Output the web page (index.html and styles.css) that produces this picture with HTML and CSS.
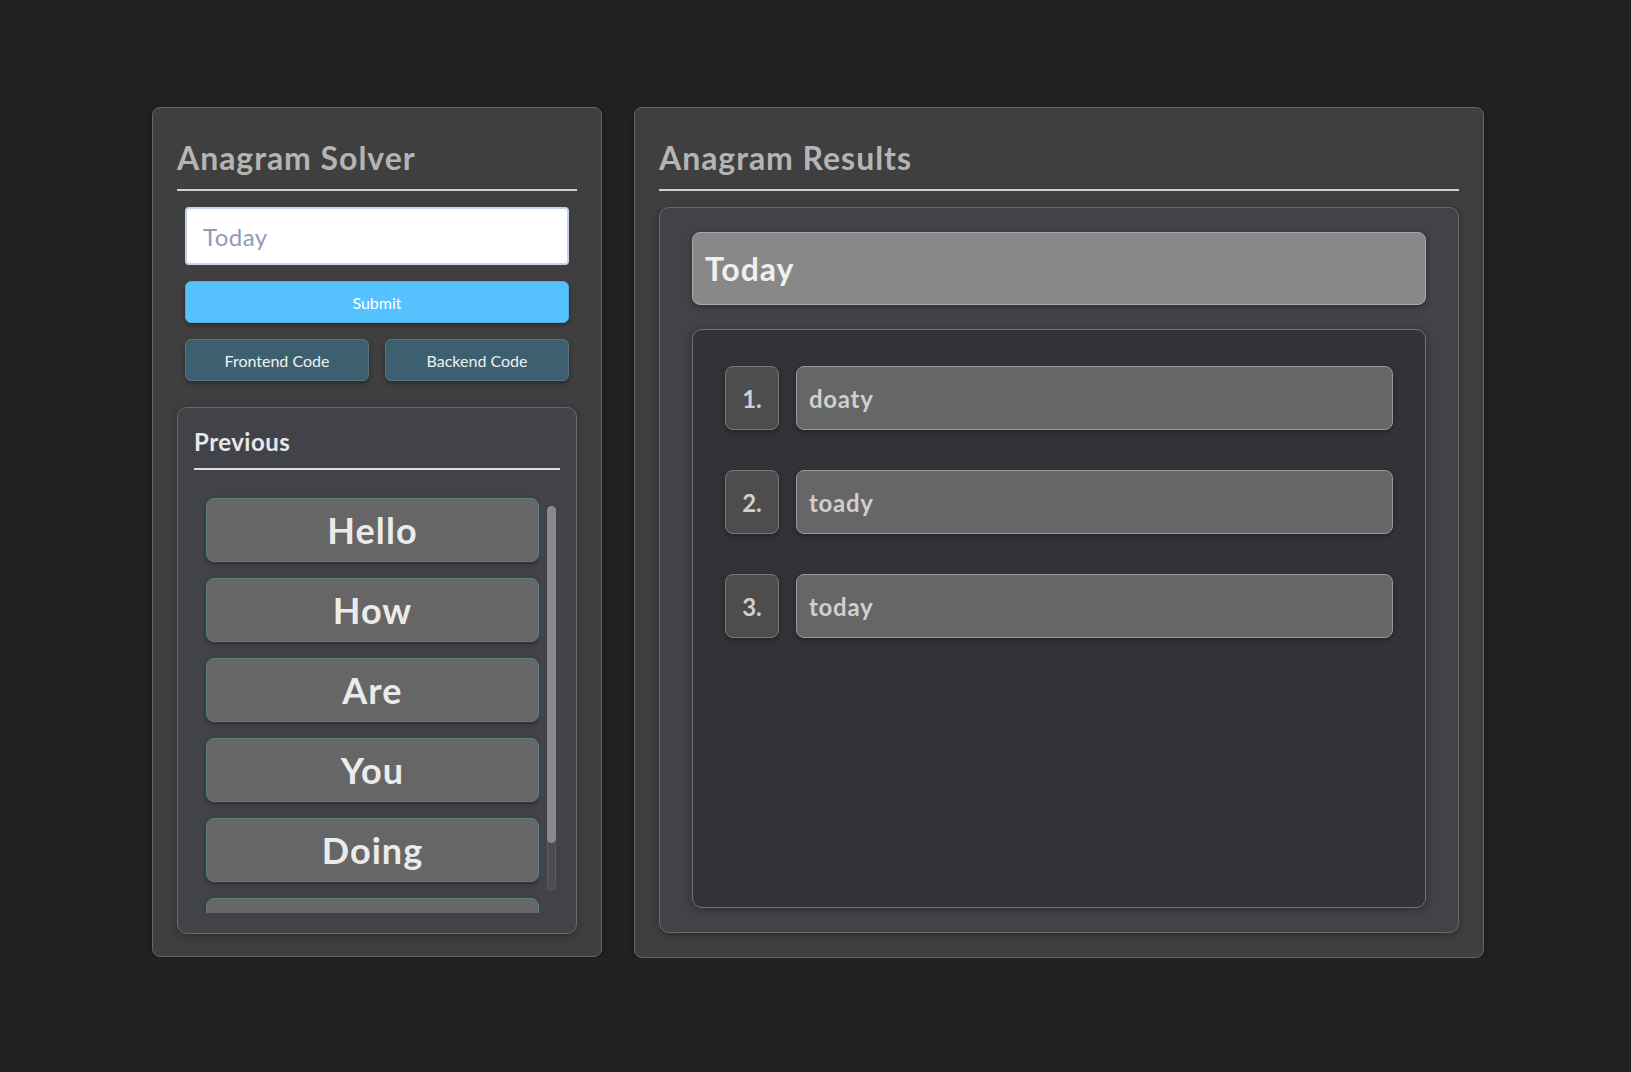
FILE: index.html
```html
<!DOCTYPE html>
<html lang="en">
<head>
<meta charset="utf-8">
<title>Anagram Solver</title>
<link rel="stylesheet" href="styles.css">
</head>
<body>
<div class="page">
  <section class="panel solver">
    <h2 class="panel-title">Anagram Solver</h2>
    <div class="form">
      <input class="word-input" type="text" placeholder="Today">
      <button class="btn submit">Submit</button>
      <div class="code-links">
        <button class="btn code">Frontend Code</button>
        <button class="btn code">Backend Code</button>
      </div>
    </div>
    <div class="previous">
      <h3 class="previous-title">Previous</h3>
      <div class="history">
        <div class="history-list">
          <div class="history-item">Hello</div>
          <div class="history-item">How</div>
          <div class="history-item">Are</div>
          <div class="history-item">You</div>
          <div class="history-item">Doing</div>
          <div class="history-item" aria-hidden="true"></div>
        </div>
        <div class="scrollbar"><div class="thumb"></div></div>
      </div>
    </div>
  </section>
  <section class="panel results">
    <h2 class="panel-title">Anagram Results</h2>
    <div class="results-box">
      <div class="query">Today</div>
      <ol class="result-list">
        <li class="result-row"><span class="rank">1.</span><span class="word">doaty</span></li>
        <li class="result-row"><span class="rank">2.</span><span class="word">toady</span></li>
        <li class="result-row"><span class="rank">3.</span><span class="word">today</span></li>
      </ol>
    </div>
  </section>
</div>
</body>
</html>
```
FILE: styles.css
```css
* { box-sizing: border-box; }

body {
  margin: 0;
  background: #222222;
  font-family: Lato, "Liberation Sans", sans-serif;
}

.page {
  display: flex;
  align-items: flex-start;
  gap: 32px;
  padding: 107px 0 0 152px;
}

.panel {
  background: #3f3f3f;
  border: 1px solid #666666;
  border-radius: 8px;
  padding: 24px;
  box-shadow: 0 2px 10px rgba(0, 0, 0, 0.35);
  display: flex;
  flex-direction: column;
}

.solver { width: 450px; padding-bottom: 22px; }
.results { width: 850px; }

.panel-title {
  margin: 0;
  padding: 4px 0 9px;
  line-height: 44px;
  font-size: 32px;
  font-weight: 700;
  letter-spacing: 0.03em;
  color: #b4b4b4;
  border-bottom: 2px solid #cfcfcf;
}

.form {
  padding: 16px 8px 0;
  display: flex;
  flex-direction: column;
  gap: 16px;
}

.word-input {
  height: 58px;
  border: 2px solid #c4d2ea;
  border-radius: 4px;
  padding: 0 16px;
  font-family: Lato, "Liberation Sans", sans-serif;
  font-size: 24px;
  letter-spacing: 0.02em;
  color: #333;
  background: #fff;
  outline: none;
}
.word-input::placeholder { color: #8f9bb5; }

.btn {
  font-family: Lato, "Liberation Sans", sans-serif;
  font-size: 16px;
  height: 42px;
  border-radius: 6px;
  box-shadow: 0 2px 5px rgba(0, 0, 0, 0.35);
  cursor: pointer;
}

.submit {
  background: #56c1ff;
  border: 1px solid #4eafe6;
  color: #ffffff;
}

.code-links {
  display: flex;
  gap: 16px;
}
.code {
  flex: 1;
  background: #3d6070;
  border: 1px solid #557582;
  color: #f0f0f0;
}

.previous {
  margin-top: 26px;
  background: #424348;
  border: 1px solid #6a6a6e;
  border-radius: 10px;
  padding: 16px;
  display: flex;
  flex-direction: column;
  box-shadow: 0 2px 8px rgba(0, 0, 0, 0.3);
}

.previous-title {
  margin: 0;
  font-size: 24px;
  line-height: 36px;
  font-weight: 700;
  letter-spacing: 0.02em;
  color: #e8e8e8;
  padding-bottom: 8px;
  border-bottom: 2px solid #dddddd;
}

.history {
  height: 431px;
  display: flex;
  margin: 12px 0 4px;
}

.history-list {
  flex: 1;
  overflow: hidden;
  display: flex;
  flex-direction: column;
  gap: 16px;
  padding: 16px 0 0 12px;
}

.history-item {
  flex-shrink: 0;
  height: 64px;
  background: #666666;
  border: 1px solid #5f8081;
  border-radius: 8px;
  display: flex;
  align-items: center;
  justify-content: center;
  font-size: 36px;
  font-weight: 700;
  letter-spacing: 0.03em;
  color: #ebebeb;
  box-shadow: 0 2px 5px rgba(0, 0, 0, 0.35);
}

.scrollbar {
  width: 9px;
  margin: 24px 4px 22px 8px;
  background: #4b4c51;
  border: 1px solid #5b5c60;
  border-radius: 5px;
  display: flex;
  flex-direction: column;
}
.thumb {
  height: 337px;
  margin: -1px;
  background: #8a8a8a;
  border-radius: 5px;
}

.results-box {
  margin-top: 16px;
  background: #424348;
  border: 1px solid #6a6a6e;
  border-radius: 10px;
  padding: 24px 32px;
  box-shadow: 0 2px 8px rgba(0, 0, 0, 0.3);
}

.query {
  height: 73px;
  background: #888888;
  border: 1px solid #a9a9a9;
  border-radius: 8px;
  padding: 0 12px;
  display: flex;
  align-items: center;
  font-size: 32px;
  font-weight: 700;
  letter-spacing: 0.03em;
  color: #f0f0f0;
  box-shadow: 0 2px 6px rgba(0, 0, 0, 0.35);
}

.result-list {
  list-style: none;
  margin: 24px 0 0;
  height: 579px;
  padding: 36px 32px 16px;
  background: #333238;
  border: 1px solid #727272;
  border-radius: 10px;
  display: flex;
  flex-direction: column;
  gap: 40px;
  box-shadow: 0 2px 8px rgba(0, 0, 0, 0.3);
}

.result-row {
  display: flex;
  gap: 17px;
  height: 64px;
}

.rank {
  width: 54px;
  background: #4d4d4d;
  border: 1px solid #7a7a7a;
  border-radius: 8px;
  display: flex;
  align-items: center;
  justify-content: center;
  font-size: 24px;
  font-weight: 700;
  color: #d0d0d0;
  box-shadow: 0 2px 5px rgba(0, 0, 0, 0.35);
}

.word {
  flex: 1;
  background: #666666;
  border: 1px solid #9a9a9a;
  border-radius: 8px;
  padding: 0 12px;
  display: flex;
  align-items: center;
  font-size: 24px;
  font-weight: 700;
  letter-spacing: 0.03em;
  color: #d0d0d0;
  box-shadow: 0 2px 5px rgba(0, 0, 0, 0.35);
}
```
